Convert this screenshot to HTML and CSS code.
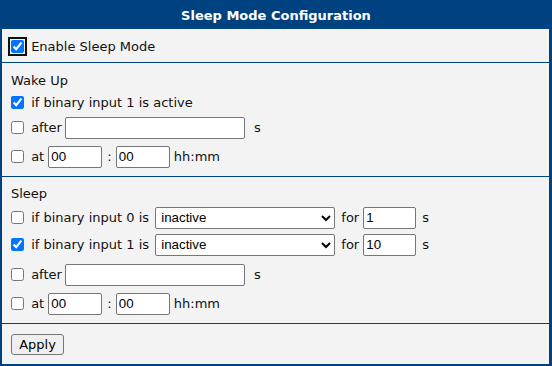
FILE: index.html
```html
<!DOCTYPE html>
<html>
<head>
<meta charset="utf-8">
<link rel="stylesheet" href="styles.css">
</head>
<body>
<form class="frame">
  <div class="header">Sleep Mode Configuration</div>
  <div class="section enable">
    <label class="row"><input type="checkbox" class="focused" checked> Enable Sleep Mode</label>
  </div>
  <div class="section wake">
    <div class="row title">Wake Up</div>
    <label class="row text"><input type="checkbox" checked> if binary input 1 is active</label>
    <div class="row field"><input type="checkbox"> after <input type="text" class="long"><span class="unit-long">s</span></div>
    <div class="row field"><input type="checkbox"> at <input type="text" class="short" value="00"><span class="colon">:</span><input type="text" class="short" value="00"> hh:mm</div>
  </div>
  <div class="section sleep">
    <div class="row title">Sleep</div>
    <div class="row field sel"><input type="checkbox"> if binary input 0 is <select><option>inactive</option><option>active</option></select> for <input type="text" class="num" value="1"><span class="unit-num">s</span></div>
    <div class="row field sel"><input type="checkbox" checked> if binary input 1 is <select><option>inactive</option><option>active</option></select> for <input type="text" class="num" value="10"><span class="unit-num">s</span></div>
    <div class="row field gap"><input type="checkbox"> after <input type="text" class="long"><span class="unit-long">s</span></div>
    <div class="row field"><input type="checkbox"> at <input type="text" class="short" value="00"><span class="colon">:</span><input type="text" class="short" value="00"> hh:mm</div>
  </div>
  <div class="section actions">
    <button type="button" class="apply">Apply</button>
  </div>
</form>
</body>
</html>
```
FILE: styles.css
```css
html, body {
  margin: 0;
  padding: 0;
  background: #f3f3f3;
}
.frame {
  box-sizing: border-box;
  width: 552px;
  height: 366px;
  margin: 0;
  border-left: 2px solid #00427f;
  border-right: 3px solid #00427f;
  border-bottom: 2px solid #00427f;
  background: #f3f3f3;
  font-family: "DejaVu Sans", Verdana, sans-serif;
  font-size: 13px;
  color: #111;
  display: flex;
  flex-direction: column;
}
.header {
  height: 29px;
  margin: 0 -3px 0 -2px;
  background: #00427f;
  color: #fff;
  font-weight: bold;
  font-size: 13px;
  display: flex;
  align-items: center;
  justify-content: center;
  padding-top: 1px;
  box-sizing: border-box;
}
.section {
  border-bottom: 1px solid #00427f;
  padding: 0 0 0 9px;
}
.row {
  display: flex;
  align-items: center;
  white-space: pre;
}
.enable {
  height: 34px;
  box-sizing: border-box;
  display: flex;
  align-items: center;
  padding-top: 1px;
}
.wake {
  padding-top: 6px;
  padding-bottom: 5px;
}
.sleep {
  padding-top: 5px;
  padding-bottom: 5px;
}
.title {
  height: 22px;
}
.text {
  height: 22px;
}
.field {
  height: 29px;
}
.field.sel {
  height: 27px;
}
.field.gap {
  margin-top: 2px;
}
input[type="checkbox"] {
  width: 13px;
  height: 13px;
  margin: 0 3px 0 0;
  accent-color: #0075ff;
}
input.focused {
  outline: 2px solid #101010;
  outline-offset: 1px;
  border-radius: 2px;
}
input[type="text"], select {
  font-family: "Liberation Sans", Arial, sans-serif;
  font-size: 13.33px;
  color: #000;
  background: #fff;
  border: 1px solid #767676;
  border-radius: 2px;
  box-sizing: border-box;
  height: 22px;
  padding: 1px 2px;
  margin: 0;
}
input.long {
  width: 180px;
  margin-left: -1px;
}
input.short {
  width: 54px;
}
.row > input.short:first-of-type {
  margin-left: -1px;
}
input.num {
  width: 53px;
}
select {
  width: 180px;
  padding: 0 0 0 1px;
  margin: 0 2px;
}
.unit-long {
  margin-left: 9px;
}
.unit-num {
  margin-left: 6px;
}
.colon {
  margin: 0 4px 0 5px;
}
.actions {
  border-bottom: none;
  flex: 1;
  display: flex;
  align-items: center;
}
.apply {
  font-family: "DejaVu Sans", Verdana, sans-serif;
  font-size: 13px;
  color: #000;
  height: 21px;
  width: 53px;
  padding: 0;
  margin: 0;
  background: #efefef;
  border: 1px solid #767676;
  border-radius: 3px;
}
```
